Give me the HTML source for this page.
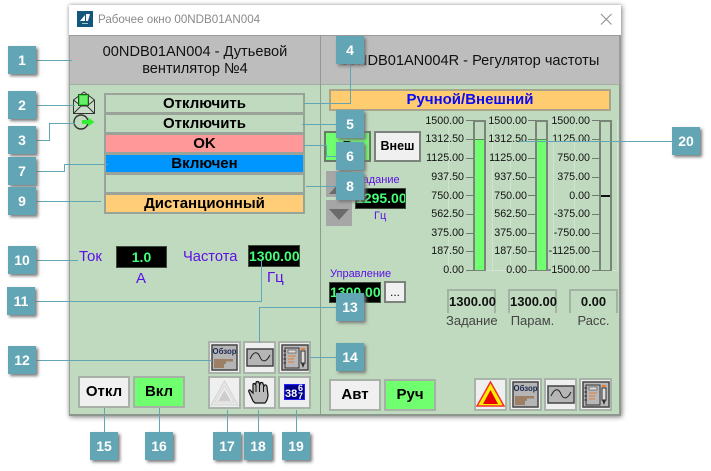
<!DOCTYPE html>
<html><head><meta charset="utf-8">
<style>
html,body{margin:0;padding:0;background:#fff;width:711px;height:471px;overflow:hidden}
body{position:relative;font-family:"Liberation Sans",sans-serif}
div{position:absolute;box-sizing:border-box}
.c{background:#62a5b5;width:28px;height:28px;color:#fff;font-weight:bold;font-size:14px;line-height:28px;text-align:center;box-shadow:2px 2px 3px #777;z-index:20}
.h{background:#62a5b5;height:1px;z-index:15}
.v{background:#62a5b5;width:1px;z-index:15}
.r{left:104px;width:201px;height:21px;border:2px solid #9aa39a;font-weight:bold;font-size:15px;line-height:17px;text-align:center;color:#000}
.b{background:#000;border:1px solid #3c4a3c;color:#44ff77;font-weight:bold;font-size:14px;line-height:19px;text-align:center;white-space:nowrap;overflow:hidden}
.t{color:#5c10e6;white-space:nowrap}
.btn{border:2px solid #a8b0a8;background:#f0f0f0;font-weight:bold;font-size:15px;text-align:center;color:#000}
.ib{width:33px;height:33px;border:2px solid #a9b3a9;background:#efefef}
.l{font-size:10.700px;text-align:right;width:50px;height:14px;line-height:14px;color:#111;white-space:nowrap}
.k{background:#6f7d6f;height:1px;width:8px}
.bar{width:13px;border:2px solid #7a857a;border-bottom-width:1px;height:151px;top:120px;background:#c0dabf}
.fill{left:0;right:0;bottom:0;top:17px;background:#6fff6f;border-top:1px solid #5a8a5a}
.val{width:49px;height:24px;top:289px;border:2px solid #a3b3a3;border-bottom:none;font-weight:bold;font-size:13px;line-height:21px;text-align:center;color:#111}
.cap{font-size:13px;color:#444;top:312px;height:17px;line-height:17px;text-align:center;white-space:nowrap}
.g{background:#d2e3d1;width:1px;top:120px;height:151px}
svg{position:absolute;left:0;top:0}
</style></head><body>

<div style="left:69px;top:5px;width:552px;height:411px;background:#fff;box-shadow:1px 1px 5px #888,0 0 3px #ccc"></div>
<div style="left:77px;top:11px;width:16px;height:16px;background:#15567c">
<svg width="16" height="16"><path d="M3 10 L8 4 L8 10Z M9 3 L13 3 L11 10 L9 10Z" fill="#fff"/><rect x="5" y="12" width="6" height="1" fill="#9cc"/></svg></div>
<div style="left:98px;top:13px;font-size:11.600px;color:#8a8a8a;line-height:14px;white-space:nowrap">Рабочее окно 00NDB01AN004</div>
<svg style="left:600px;top:13px" width="13" height="13"><path d="M1 1L11.500 11.500M11.500 1L1 11.500" stroke="#8c8c8c" stroke-width="1"/></svg>

<div style="left:69px;top:35px;width:552px;height:50px;background:#bdbdbd;border-top:1px solid #999;border-bottom:1px solid #a3aea3"></div>
<div style="left:69px;top:85px;width:552px;height:331px;background:#c0dabf;border-bottom:2px solid #8d978d;border-right:2px solid #8d978d;border-left:1px solid #97a397"></div>
<div style="left:69px;top:35px;width:1px;height:50px;background:#a0a0a0"></div>
<div style="left:619px;top:35px;width:2px;height:50px;background:#9a9a9a"></div>
<div style="left:320px;top:35px;width:1px;height:380px;background:#8f9b8f;border-right:0"></div>

<div style="left:70px;top:44px;width:250px;font-size:14.600px;line-height:17px;text-align:center;color:#111">00NDB01AN004 - Дутьевой<br>вентилятор №4</div>
<div style="left:321px;top:53px;width:298px;font-size:14.600px;line-height:17px;text-align:center;color:#111;white-space:nowrap">00NDB01AN004R - Регулятор частоты</div>

<!-- left status icons -->
<svg style="left:72px;top:91px" width="24" height="44">
<path d="M1.500 9 L12 1 L22.500 9 V22.500 H1.500Z" fill="#c9dcc8" stroke="#333" stroke-width="1"/>
<path d="M1.500 9 L9 15 M22.500 9 L15 15" fill="none" stroke="#333"/>
<rect x="6.500" y="3.500" width="10" height="11" fill="#33dd33" stroke="#225522" stroke-width="1"/>
<path d="M8 6H15M8 8H15M8 10H15M8 12H15" stroke="#9dff9d" stroke-width="1"/>
<path d="M1.500 22.500 L9 15 L15 15 L22.500 22.500" fill="none" stroke="#333"/>
<circle cx="9" cy="31" r="7" fill="none" stroke="#333" stroke-width="1.400"/>
<rect x="10" y="29" width="7" height="4" fill="#33ee33"/>
<path d="M16 26.500 L22.500 31 L16 35.500Z" fill="#33ee33"/>
</svg>

<!-- rows -->
<div class="r" style="top:93px">Отключить</div>
<div class="r" style="top:113px">Отключить</div>
<div class="r" style="top:133px;background:#ff9999">OK</div>
<div class="r" style="top:153px;background:#0096ff">Включен</div>
<div class="r" style="top:173px"></div>
<div class="r" style="top:193px;background:#ffcc77">Дистанционный</div>

<!-- right top -->
<div style="left:329px;top:89px;width:282px;height:22px;background:#ffcc70;border:2px solid #a9a48a;color:#0a0af5;font-weight:bold;font-size:15px;line-height:18px;text-align:center">Ручной/Внешний</div>
<div class="btn" style="left:324px;top:131px;width:47px;height:31px;background:#6fff6f;border-color:#687a68;line-height:27px">Р</div>
<div class="btn" style="left:374px;top:131px;width:47px;height:31px;border-color:#7c827c;font-size:12.500px;line-height:27px">Внеш</div>
<div style="left:326px;top:171px;width:26px;height:26px;background:#a6a6a6"></div>
<svg style="left:326px;top:171px" width="26" height="26"><path d="M3 23L13 12L23 23Z" fill="#6b6b6b"/></svg>
<div style="left:326px;top:200px;width:26px;height:26px;background:#a6a6a6"></div>
<svg style="left:326px;top:200px" width="26" height="26"><path d="M3 9H23L13 20Z" fill="#6b6b6b"/></svg>
<div class="t" style="left:356px;top:173px;font-size:11px;line-height:14px">Задание</div>
<div class="b" style="left:355px;top:188px;width:51px;height:21px">1295.00</div>
<div class="t" style="left:374px;top:209px;font-size:11px;line-height:14px">Гц</div>

<!-- scales -->
<div class="g" style="left:448px"></div><div class="g" style="left:492px"></div><div class="g" style="left:510px"></div><div class="g" style="left:553px"></div><div class="g" style="left:574px"></div><div class="g" style="left:617px"></div>
<div style="left:447px;top:270px;width:171px;height:1px;background:#d2e3d1"></div>

<div class="bar" style="left:473px"><div class="fill"></div></div>
<div class="bar" style="left:535px"><div class="fill"></div></div>
<div class="bar" style="left:599px"></div>
<div style="left:601px;top:195px;width:9px;height:2px;background:#111"></div>

<div class="l" style="left:414px;top:114px">1500.00</div><div class="k" style="left:466px;top:120px"></div>
<div class="l" style="left:414px;top:132px">1312.50</div><div class="k" style="left:466px;top:139px"></div>
<div class="l" style="left:414px;top:151px">1125.00</div><div class="k" style="left:466px;top:158px"></div>
<div class="l" style="left:414px;top:170px">937.50</div><div class="k" style="left:466px;top:177px"></div>
<div class="l" style="left:414px;top:189px">750.00</div><div class="k" style="left:466px;top:195px"></div>
<div class="l" style="left:414px;top:207px">562.50</div><div class="k" style="left:466px;top:214px"></div>
<div class="l" style="left:414px;top:226px">375.00</div><div class="k" style="left:466px;top:233px"></div>
<div class="l" style="left:414px;top:244px">187.50</div><div class="k" style="left:466px;top:251px"></div>
<div class="l" style="left:414px;top:263px">0.00</div><div class="k" style="left:466px;top:270px"></div>

<div class="l" style="left:477px;top:114px">1500.00</div><div class="k" style="left:528px;top:120px"></div>
<div class="l" style="left:477px;top:132px">1312.50</div><div class="k" style="left:528px;top:139px"></div>
<div class="l" style="left:477px;top:151px">1125.00</div><div class="k" style="left:528px;top:158px"></div>
<div class="l" style="left:477px;top:170px">937.50</div><div class="k" style="left:528px;top:177px"></div>
<div class="l" style="left:477px;top:189px">750.00</div><div class="k" style="left:528px;top:195px"></div>
<div class="l" style="left:477px;top:207px">562.50</div><div class="k" style="left:528px;top:214px"></div>
<div class="l" style="left:477px;top:226px">375.00</div><div class="k" style="left:528px;top:233px"></div>
<div class="l" style="left:477px;top:244px">187.50</div><div class="k" style="left:528px;top:251px"></div>
<div class="l" style="left:477px;top:263px">0.00</div><div class="k" style="left:528px;top:270px"></div>

<div class="l" style="left:540px;top:114px">1500.00</div><div class="k" style="left:592px;top:120px"></div>
<div class="l" style="left:540px;top:132px">1125.00</div><div class="k" style="left:592px;top:139px"></div>
<div class="l" style="left:540px;top:151px">750.00</div><div class="k" style="left:592px;top:158px"></div>
<div class="l" style="left:540px;top:170px">375.00</div><div class="k" style="left:592px;top:177px"></div>
<div class="l" style="left:540px;top:189px">0.00</div><div class="k" style="left:592px;top:195px"></div>
<div class="l" style="left:540px;top:207px">-375.00</div><div class="k" style="left:592px;top:214px"></div>
<div class="l" style="left:540px;top:226px">-750.00</div><div class="k" style="left:592px;top:233px"></div>
<div class="l" style="left:540px;top:244px">-1125.00</div><div class="k" style="left:592px;top:251px"></div>
<div class="l" style="left:540px;top:263px">-1500.00</div><div class="k" style="left:592px;top:270px"></div>

<!-- lower right -->
<div class="t" style="left:330px;top:267px;font-size:11px;line-height:14px">Управление</div>
<div class="b" style="left:329px;top:282px;width:52px;height:21px">1300.00</div>
<div style="left:384px;top:281px;width:22px;height:22px;background:#f0f0f0;border:2px solid #7c827c;font-size:12px;line-height:18px;text-align:center;color:#111">...</div>
<div class="val" style="left:447px">1300.00</div>
<div class="val" style="left:508px">1300.00</div>
<div class="val" style="left:569px;border-color:#a3b3a3">0.00</div>
<div class="cap" style="left:446px;width:51px">Задание</div>
<div class="cap" style="left:507px;width:51px">Парам.</div>
<div class="cap" style="left:568px;width:51px">Расс.</div>

<!-- lower left -->
<div class="t" style="left:79px;top:248px;font-size:15px;line-height:18px">Ток</div>
<div class="b" style="left:116px;top:246px;width:51px;height:22px;line-height:20px">1.0</div>
<div class="t" style="left:183px;top:248px;font-size:14.700px;line-height:18px">Частота</div>
<div class="b" style="left:248px;top:245px;width:52px;height:22px;line-height:20px">1300.00</div>
<div class="t" style="left:136px;top:270px;font-size:15px;line-height:18px">А</div>
<div class="t" style="left:267px;top:269px;font-size:15px;line-height:18px">Гц</div>

<!-- buttons -->
<div class="btn" style="left:78px;top:376px;width:52px;height:32px;line-height:28px">Откл</div>
<div class="btn" style="left:133px;top:376px;width:52px;height:32px;line-height:28px;background:#6fff6f">Вкл</div>
<div class="btn" style="left:329px;top:379px;width:52px;height:32px;line-height:28px">Авт</div>
<div class="btn" style="left:384px;top:379px;width:52px;height:32px;line-height:28px;background:#6fff6f">Руч</div>

<!-- icon buttons -->
<div class="ib" style="left:208px;top:341px"><svg width="29" height="29"><rect x="2" y="2" width="25" height="25" fill="#b5b5b5" stroke="#444" stroke-width="1.500"/><path d="M4 16H23V18.500H16V21H14V25H4Z" fill="#9c7f64"/><text x="14.500" y="11" font-size="7.800" font-weight="bold" text-anchor="middle" fill="#1c2a50" font-family="Liberation Sans">Обзор</text></svg></div>
<div class="ib" style="left:243px;top:341px"><svg width="29" height="29"><rect x="2" y="6" width="26" height="17" fill="#b5b5b5" stroke="#444" stroke-width="1.500"/><path d="M5 16C9 7 13 9 15 14S21 20 25 12" fill="none" stroke="#222"/></svg></div>
<div class="ib" style="left:278px;top:341px"><svg width="29" height="29"><rect x="2" y="2" width="26" height="25" fill="#b8b8b8" stroke="#444" stroke-width="1.500"/><rect x="5" y="5" width="14" height="20" fill="#b8b8b8" stroke="#333"/><rect x="8" y="7" width="8" height="3" fill="#ddd" stroke="#444" stroke-width=".6"/><path d="M8 13H16M8 16H14M8 19H14" stroke="#e0803a"/><path d="M3.500 8H6M3.500 12H6M3.500 16H6M3.500 20H6" stroke="#222"/><rect x="21" y="8" width="4" height="12" fill="#ddd" stroke="#333"/><path d="M21 6H25" stroke="#e0803a" stroke-width="2"/><path d="M21 20L23 25L25 20Z" fill="#333"/></svg></div>
<div class="ib" style="left:208px;top:376px"><svg width="29" height="29"><path d="M14.500 3L28 27H1Z" fill="#e8e8e8" stroke="#d4d4d4"/><path d="M14.500 8L24 24H5Z" fill="#efefef" stroke="#d8d8d8"/><path d="M14.500 12L21 23H8Z" fill="#cdcdcd"/></svg></div>
<div class="ib" style="left:243px;top:376px"><svg width="29" height="29"><path d="M8 23L4 14C3 12 5 11 6 13L8 15L8 7C8 5 10 5 10.500 7L11 5C11 3 14 3 14 5L15 6C15 4 18 4 18 6L19 8C20 6 22 7 22 9L23 17C23 21 21 24 20 25L10 25Z" fill="#b9b9b9" stroke="#111" stroke-width="1.200"/><path d="M11 7V14M14.500 6V14M18.500 8V14" stroke="#111"/></svg></div>
<div class="ib" style="left:278px;top:376px"><svg width="29" height="29"><rect x="4" y="6" width="21" height="16" fill="#000088"/><rect x="4.500" y="6.500" width="20" height="15" fill="none" stroke="#2222ff"/><text x="5" y="19" font-size="11" font-weight="bold" fill="#fff" font-family="Liberation Sans">38</text><text x="18" y="13" font-size="9" font-weight="bold" fill="#fff" font-family="Liberation Sans">6</text><text x="18" y="21" font-size="9" font-weight="bold" fill="#fff" font-family="Liberation Sans">7</text></svg></div>

<div class="ib" style="left:474px;top:378px"><svg width="29" height="29"><path d="M14.500 2L28 26H1Z" fill="#ffee00" stroke="#f03030" stroke-width="1.500"/><path d="M14.500 10L22 24H7Z" fill="#e80000"/></svg></div>
<div class="ib" style="left:509px;top:378px"><svg width="29" height="29"><rect x="2" y="2" width="25" height="25" fill="#b5b5b5" stroke="#444" stroke-width="1.500"/><path d="M4 16H23V18.500H16V21H14V25H4Z" fill="#9c7f64"/><text x="14.500" y="11" font-size="7.800" font-weight="bold" text-anchor="middle" fill="#1c2a50" font-family="Liberation Sans">Обзор</text></svg></div>
<div class="ib" style="left:544px;top:378px"><svg width="29" height="29"><rect x="2" y="6" width="26" height="17" fill="#b5b5b5" stroke="#444" stroke-width="1.500"/><path d="M5 16C9 7 13 9 15 14S21 20 25 12" fill="none" stroke="#222"/></svg></div>
<div class="ib" style="left:579px;top:378px"><svg width="29" height="29"><rect x="2" y="2" width="26" height="25" fill="#b8b8b8" stroke="#444" stroke-width="1.500"/><rect x="5" y="5" width="14" height="20" fill="#b8b8b8" stroke="#333"/><rect x="8" y="7" width="8" height="3" fill="#ddd" stroke="#444" stroke-width=".6"/><path d="M8 13H16M8 16H14M8 19H14" stroke="#e0803a"/><path d="M3.500 8H6M3.500 12H6M3.500 16H6M3.500 20H6" stroke="#222"/><rect x="21" y="8" width="4" height="12" fill="#ddd" stroke="#333"/><path d="M21 6H25" stroke="#e0803a" stroke-width="2"/><path d="M21 20L23 25L25 20Z" fill="#333"/></svg></div>

<!-- leader lines -->
<div class="h" style="left:36px;top:60px;width:36px"></div>
<div class="h" style="left:36px;top:105px;width:39px"></div>
<div class="h" style="left:36px;top:140px;width:14px"></div><div class="v" style="left:49px;top:123px;height:18px"></div><div class="h" style="left:49px;top:123px;width:26px"></div>
<div class="h" style="left:36px;top:171px;width:29px"></div><div class="v" style="left:64px;top:164px;height:8px"></div><div class="h" style="left:64px;top:164px;width:44px"></div>
<div class="h" style="left:36px;top:201px;width:65px"></div>
<div class="v" style="left:350px;top:64px;height:40px"></div><div class="h" style="left:304px;top:103px;width:47px"></div>
<div class="h" style="left:302px;top:124px;width:34px"></div>
<div class="h" style="left:304px;top:145px;width:23px"></div><div class="v" style="left:326px;top:145px;height:11px"></div><div class="h" style="left:326px;top:156px;width:10px"></div>
<div class="h" style="left:306px;top:186px;width:30px"></div>
<div class="h" style="left:520px;top:141px;width:152px"></div>
<div class="h" style="left:36px;top:260px;width:42px"></div>
<div class="h" style="left:35px;top:301px;width:227px"></div><div class="v" style="left:261px;top:260px;height:41px"></div>
<div class="h" style="left:36px;top:360px;width:176px"></div>
<div class="h" style="left:259px;top:307px;width:77px"></div><div class="v" style="left:259px;top:307px;height:36px"></div>
<div class="h" style="left:310px;top:357px;width:26px"></div>
<div class="v" style="left:104px;top:408px;height:24px"></div>
<div class="v" style="left:159px;top:408px;height:24px"></div>
<div class="v" style="left:227px;top:410px;height:22px"></div>
<div class="v" style="left:258px;top:410px;height:22px"></div>
<div class="v" style="left:296px;top:410px;height:22px"></div>

<!-- callouts -->
<div class="c" style="left:8px;top:46px">1</div>
<div class="c" style="left:8px;top:91px">2</div>
<div class="c" style="left:8px;top:126px">3</div>
<div class="c" style="left:8px;top:157px">7</div>
<div class="c" style="left:8px;top:187px">9</div>
<div class="c" style="left:8px;top:246px">10</div>
<div class="c" style="left:7px;top:287px">11</div>
<div class="c" style="left:8px;top:346px">12</div>
<div class="c" style="left:336px;top:36px">4</div>
<div class="c" style="left:336px;top:110px">5</div>
<div class="c" style="left:336px;top:142px">6</div>
<div class="c" style="left:336px;top:172px">8</div>
<div class="c" style="left:672px;top:127px">20</div>
<div class="c" style="left:336px;top:293px">13</div>
<div class="c" style="left:336px;top:343px">14</div>
<div class="c" style="left:90px;top:432px">15</div>
<div class="c" style="left:145px;top:432px">16</div>
<div class="c" style="left:213px;top:432px">17</div>
<div class="c" style="left:244px;top:432px">18</div>
<div class="c" style="left:282px;top:432px">19</div>
</body></html>
